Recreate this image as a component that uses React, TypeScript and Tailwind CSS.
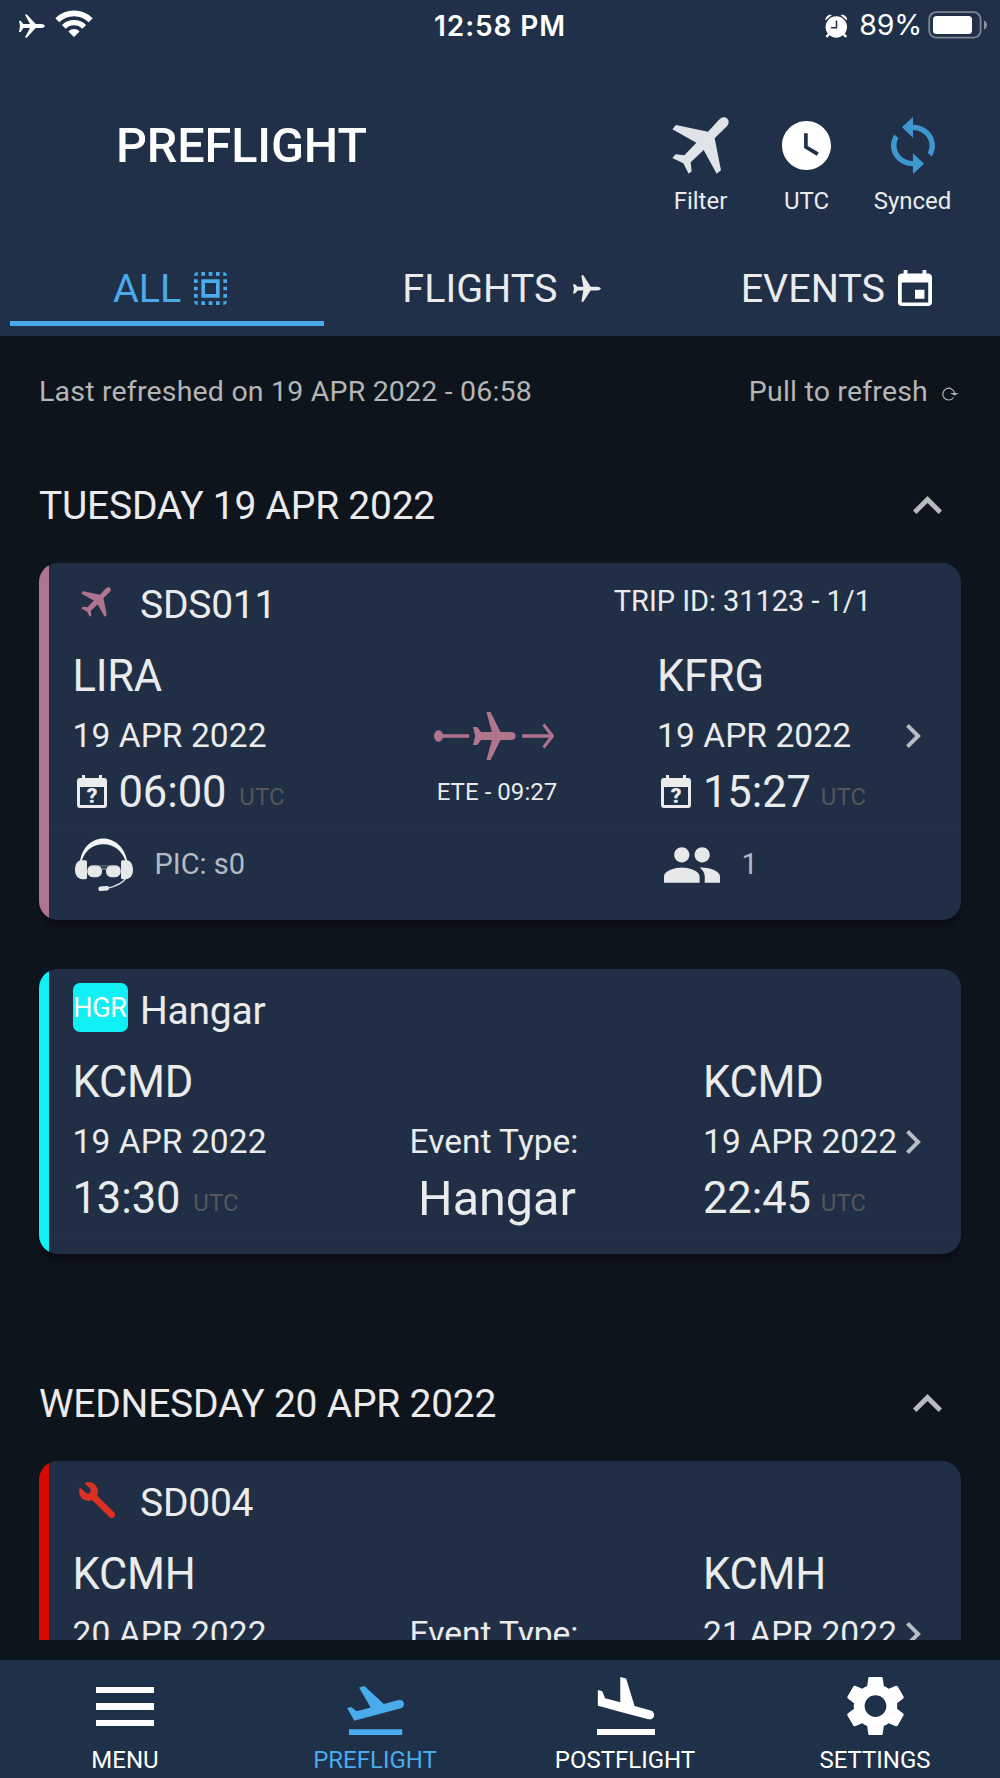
import type { ReactNode } from "react";

const PLANE_UP_RIGHT =
  "M156 1a14 14 0 0 1 14 14q0 6-4 11L128 64l19 96-13 10-39-71-39 37 3 27-9 7-16-31L1 123l10-11 26 3 36-38L1 37l11-13 96 20L141 8Q148 1 156 1Z";

type IconProps = { className: string; viewBox: string; d: string; stretch?: boolean };

function Icon({ className, viewBox, d, stretch }: IconProps) {
  return (
    <svg
      className={`block shrink-0 ${className}`}
      viewBox={viewBox}
      fill="currentColor"
      preserveAspectRatio={stretch ? "none" : undefined}
    >
      <path d={d} />
    </svg>
  );
}

function StatusBar() {
  return (
    <div className="grid h-[51px] grid-cols-3 items-center font-['Inter',sans-serif] text-white">
      <div className="flex items-center pl-[19px]">
        <svg className="mt-px h-[24px] w-[26px]" viewBox="57 41 78 70" fill="currentColor">
          <path d="M57 60h5l8 10h20L75 42l5-1 27 29h17q8 0 11 6-3 6-11 6h-17l-27 29-5-1 15-28H70l-8 12h-5l3-18z" />
        </svg>
        <svg className="mb-[4px] ml-[10px] h-[27px] w-[38px]" viewBox="0 0 38 27" fill="none" stroke="currentColor">
          <path d="M2.300 10.300a23.700 23.700 0 0 1 33.400 0" strokeWidth="5.600" />
          <path d="M8.800 16.800a14.500 14.500 0 0 1 20.400 0" strokeWidth="5.400" />
          <path d="M19 27l-5.600-5.600a8 8 0 0 1 11.200 0z" fill="currentColor" stroke="none" />
        </svg>
      </div>
      <div className="text-center text-[28px] font-semibold tracking-[0.900px]">12:58 PM</div>
      <div className="flex items-center justify-end pr-[12px]">
        <svg className="h-[24px] w-[23px]" viewBox="0 0 23 24" fill="currentColor">
          <circle cx="11.300" cy="13" r="10.700" />
          <path d="M.5 6.500A5 5 0 0 1 7 1z M22 6.500A5 5 0 0 0 15.500 1z" />
          <path d="M4 20l-2.600 3M18.600 20l2.600 3" stroke="currentColor" strokeWidth="2.400" />
          <path d="M11.500 6.500v7.200H6" fill="none" stroke="#203049" strokeWidth="1.500" />
        </svg>
        <div className="ml-[11px] text-[28.500px] tracking-[-0.200px]">89%</div>
        <svg className="mb-[2px] ml-[6px] h-[28px] w-[60px]" viewBox="0 0 60 28">
          <rect x="1.200" y="1.200" width="51.400" height="25.400" rx="7" fill="none" stroke="#7b8592" strokeWidth="1.800" />
          <rect x="5" y="5" width="39" height="18" rx="3.500" fill="#fff" />
          <path d="M56 9.500q3 1.500 3 4.500t-3 4.500z" fill="#8b949f" />
        </svg>
      </div>
    </div>
  );
}

function Action({ label, children }: { label: string; children: ReactNode }) {
  return (
    <div className="flex w-[106px] flex-col items-center">
      <div className="flex h-[66px] items-center justify-center">{children}</div>
      <div className="mt-[8px] text-[24px] leading-[30px]">{label}</div>
    </div>
  );
}

function Header() {
  return (
    <header className="flex h-[336px] shrink-0 flex-col bg-[#203049]">
      <StatusBar />
      <div className="flex h-[189px] justify-between pr-[34.500px] pl-[116px]">
        <h1 className="mt-[67px] text-[48.500px] leading-[56px] font-medium tracking-[-0.100px] text-white">PREFLIGHT</h1>
        <div className="mt-[61px] flex">
          <Action label="Filter">
            <Icon className="h-[57px] w-[57px] text-[#e0e4e8]" viewBox="0 0 171 171" d={PLANE_UP_RIGHT} />
          </Action>
          <Action label="UTC">
            <Icon
              className="h-[49px] w-[49px] text-white"
              viewBox="2 2 20 20"
              d="M12 2C6.500 2 2 6.500 2 12s4.500 10 10 10 10-4.500 10-10S17.500 2 12 2zm4.200 14.200L11 13V7h1.500v5.200l4.500 2.700-.8 1.300z"
            />
          </Action>
          <Action label="Synced">
            <Icon
              stretch
              className="h-[57px] w-[44px] text-[#3f97cf]"
              viewBox="4 1 16 22"
              d="M12 4V1L8 5l4 4V6c3.310 0 6 2.690 6 6 0 1.010-.25 1.970-.7 2.800l1.460 1.460C19.540 15.030 20 13.570 20 12c0-4.420-3.580-8-8-8zm0 14c-3.310 0-6-2.690-6-6 0-1.010.25-1.970.7-2.800L5.240 7.740C4.460 8.970 4 10.430 4 12c0 4.420 3.580 8 8 8v3l4-4-4-4v3z"
            />
          </Action>
        </div>
      </div>
      <nav className="grid grow grid-cols-3 text-[39.500px] leading-none">
        <div className="flex flex-col pl-[10px] text-[#4aabec]">
          <div className="flex h-[81px] items-center pt-[16px] pl-[103px]">
            ALL
            <Icon
              className="ml-[13px] h-[33px] w-[33px]"
              viewBox="3 3 18 18"
              d="M3 5h2V3c-1.100 0-2 .9-2 2zm0 8h2v-2H3v2zm4 8h2v-2H7v2zM3 9h2V7H3v2zm10-6h-2v2h2V3zm6 0v2h2c0-1.100-.9-2-2-2zM5 21v-2H3c0 1.100.9 2 2 2zm-2-4h2v-2H3v2zM9 3H7v2h2V3zm2 18h2v-2h-2v2zm8-8h2v-2h-2v2zm0 8c1.100 0 2-.9 2-2h-2v2zm0-12h2V7h-2v2zm0 8h2v-2h-2v2zm-4 4h2v-2h-2v2zm0-16h2V3h-2v2zM7 17h10V7H7v10zm2-8h6v6H9V9z"
            />
          </div>
          <div className="h-[5px] w-[314px] bg-[#4aabec]" />
        </div>
        <div className="flex h-[81px] items-center pt-[16px] pl-[69px]">
          FLIGHTS
          <svg className="ml-[16px] h-[27px] w-[28px]" viewBox="219 826 84 80" fill="currentColor">
            <path d="M219 853h6l8 8h17l-6-35h6l22 35h20q8 0 11 5-3 6-11 6h-20l-22 34h-6l6-34h-17l-8 9h-6l3-14z" />
          </svg>
        </div>
        <div className="flex h-[81px] items-center pt-[16px] pl-[74px]">
          EVENTS
          <Icon
            stretch
            className="mb-px ml-[13px] h-[36px] w-[34px] text-white"
            viewBox="3 1 18 20"
            d="M17 12h-5v5h5v-5zM16 1v2H8V1H6v2H5c-1.110 0-1.990.9-1.990 2L3 19c0 1.100.89 2 2 2h14c1.100 0 2-.9 2-2V5c0-1.100-.9-2-2-2h-1V1h-2zm3 18H5V8h14v11z"
          />
        </div>
      </nav>
    </header>
  );
}

function DayHeading({ children }: { children: ReactNode }) {
  return (
    <div className="flex h-[117px] shrink-0 items-center justify-between pr-[19px]">
      <h2 className="pt-[3px] text-[39px] tracking-[-0.250px]">{children}</h2>
      <Icon
        className="h-[18px] w-[29px] text-[#b9babb]"
        viewBox="6 8 12 7.410"
        d="M12 8l-6 6 1.410 1.410L12 10.830l4.590 4.580L18 14z"
      />
    </div>
  );
}

function CalendarQuestion() {
  return (
    <svg className="mr-[12px] mb-[2px] ml-[4px] h-[33px] w-[30px] shrink-0" viewBox="0 0 30 33" fill="currentColor">
      <path
        fillRule="evenodd"
        d="M5 0h3v3h14V0h3v3h2a3 3 0 0 1 3 3v24a3 3 0 0 1-3 3H3a3 3 0 0 1-3-3V6a3 3 0 0 1 3-3h2zM3 12v18h24V12z"
      />
      <text x="15" y="28" textAnchor="middle" fontFamily="Roboto, sans-serif" fontWeight="900" fontSize="21">
        ?
      </text>
    </svg>
  );
}

type StopProps = { airport: string; date: string; time?: string; estimated?: boolean; arrival?: boolean };

function Stop({ airport, date, time, estimated, arrival }: StopProps) {
  return (
    <div className={`pt-px whitespace-nowrap ${arrival ? "pl-[0.500px]" : ""}`}>
      <div className="flex h-[60px] items-center pt-[2px] text-[43.500px] tracking-[-0.250px]">{airport}</div>
      <div className="flex h-[60px] items-center text-[33.500px] tracking-[0.080px]">{date}</div>
      {time && (
        <div className="flex h-[53px] items-center text-[43.500px] tracking-[-0.100px]">
          {estimated && <CalendarQuestion />}
          {time}
          <span className={`mt-[8px] text-[24px] tracking-normal text-[#54565a] ${arrival ? "ml-[10px]" : "ml-[13px]"}`}>
            UTC
          </span>
        </div>
      )}
    </div>
  );
}

function Chevron() {
  return (
    <Icon
      className="mt-[79px] -ml-px h-[24px] w-[15px] text-[#b8bdc3]"
      viewBox="8.590 6 7.410 12"
      d="M10 6L8.590 7.410 13.170 12l-4.580 4.590L10 18l6-6z"
    />
  );
}

function Card({ accent, height, children }: { accent: string; height: string; children: ReactNode }) {
  return (
    <article className={`flex shrink-0 overflow-hidden rounded-[19px] bg-[#202f45] shadow-[0_9px_4px_-3px_#0b0e14] ${height}`}>
      <div className={`w-[9.500px] shrink-0 ${accent}`} />
      <div className="grow">{children}</div>
    </article>
  );
}

function CardTitle({ icon, title, trip }: { icon: ReactNode; title: string; trip?: string }) {
  return (
    <div className="flex h-[82px] items-center pt-px pr-[90px] pl-[24px] text-[39px] tracking-[-0.250px]">
      <div className="flex w-[67.500px] shrink-0">{icon}</div>
      <span className="pt-[2px]">{title}</span>
      {trip && <span className="mb-[5px] ml-auto text-[29px] tracking-[-0.050px]">{trip}</span>}
    </div>
  );
}

function RouteGraphic() {
  return (
    <svg className="mr-[4px] h-[50px] w-[122px] text-[#b0758e]" viewBox="434 711 122 50" fill="currentColor">
      <ellipse cx="438.600" cy="736" rx="4.600" ry="5.700" />
      <path d="M442 734.200h27v3.600h-27zM522 734.200h31v3.600h-31z" />
      <path d="M543.500 724.500L552.500 736l-9 11.500" fill="none" stroke="currentColor" strokeWidth="3" />
      <path d="M473 727h4.200l4 5h10.600l-5.300-20h4l10 20H511q4.500 0 4.500 4t-4.500 4h-10.500l-10 20h-4l5.300-20h-10.600l-4 5H473l2.200-9z" />
    </svg>
  );
}

function HeadsetIcon() {
  return (
    <svg className="h-[54px] w-[58px]" viewBox="225 654 174 161" fill="#e6e8ea">
      <path d="M240 724c6-40 34-69 70-69s65 29 72 69h-5c-10-32-34-52-67-52s-57 20-65 52z" fill="#f4f5f6" />
      <path d="M244 720h12q5 0 5 5v47q0 5-5 5h-9c-14 0-22-12-22-28s7-29 19-29zM380 720h-12q-5 0-5 5v47q0 5 5 5h9c14 0 22-12 22-28s-7-29-19-29z" />
      <rect x="262" y="735" width="44" height="36" rx="16" />
      <rect x="318" y="735" width="44" height="36" rx="16" />
      <path d="M272 737.500h80" stroke="#a9b0b9" strokeWidth="2" />
      <path d="M304 748q8-5 16 0" fill="none" stroke="#a9b0b9" strokeWidth="3" />
      <path d="M376 776c-8 12-30 22-52 28" fill="none" stroke="#e6e8ea" strokeWidth="4" />
      <rect x="295" y="798" width="32" height="14" rx="6" transform="rotate(-5 311 805)" />
    </svg>
  );
}

function WrenchIcon() {
  return (
    <svg className="-mt-[5px] ml-[6px] h-[36px] w-[36px] text-[#dc3022]" viewBox="236 366 108 108">
      <path d="M270 401l64 63" stroke="currentColor" strokeWidth="20" strokeLinecap="round" />
      <circle cx="264.500" cy="394.500" r="28.500" fill="currentColor" />
      <path d="M234 378l6 5 17 16q8 4 12-1t1-12l-17-16-4-8h-15z" fill="#202f45" />
    </svg>
  );
}

function FlightCard() {
  return (
    <Card accent="bg-[#b0758e]" height="h-[357px]">
      <CardTitle
        icon={<Icon className="-mt-[5px] ml-[8px] h-[30px] w-[30px] text-[#b0758e]" viewBox="0 0 171 171" d={PLANE_UP_RIGHT} />}
        title="SDS011"
        trip="TRIP ID: 31123 - 1/1"
      />
      <div className="grid h-[183px] grid-cols-[264px_320px_250px_1fr] border-b border-[#24344b] pl-[24px]">
        <Stop airport="LIRA" date="19 APR 2022" time="06:00" estimated />
        <div className="flex flex-col items-center pt-[66px]">
          <RouteGraphic />
          <div className="mt-[16px] pl-px text-[24px] leading-[30px] tracking-[0.050px]">ETE - 09:27</div>
        </div>
        <Stop airport="KFRG" date="19 APR 2022" time="15:27" estimated arrival />
        <Chevron />
      </div>
      <div className="flex h-[74px] items-center pl-[26px] text-[29px] text-[#b5bac2]">
        <div className="flex w-[589px] items-center">
          <HeadsetIcon />
          <span className="ml-[22px]">PIC: s0</span>
        </div>
        <Icon
          className="h-[36px] w-[56px] text-[#e6e8ea]"
          viewBox="1 5 22 14"
          d="M16 11c1.660 0 2.990-1.340 2.990-3S17.660 5 16 5c-1.660 0-3 1.340-3 3s1.340 3 3 3zm-8 0c1.660 0 2.990-1.340 2.990-3S9.660 5 8 5C6.340 5 5 6.340 5 8s1.340 3 3 3zm0 2c-2.330 0-7 1.170-7 3.500V19h14v-2.500c0-2.330-4.670-3.500-7-3.500zm8 0c-.29 0-.62.02-.97.05 1.160.84 1.970 1.970 1.970 3.450V19h6v-2.500c0-2.330-4.670-3.500-7-3.500z"
        />
        <span className="ml-[22px]">1</span>
      </div>
    </Card>
  );
}

type EventCardProps = { accent: string; icon: ReactNode; title: string; type?: string; from: StopProps; to: StopProps };

function EventCard({ accent, icon, title, type, from, to }: EventCardProps) {
  return (
    <Card accent={accent} height="h-[285px]">
      <CardTitle icon={icon} title={title} />
      <div className="grid h-[183px] grid-cols-[218px_412px_204px_1fr] border-b border-[#213148] pl-[24px]">
        <Stop {...from} />
        <div className="flex flex-col items-center pt-[61px]">
          <div className="flex h-[60px] items-center pr-[5px] text-[33.500px]">Event Type:</div>
          {type && <div className="flex h-[53px] items-center pt-px pl-px text-[48.500px]">{type}</div>}
        </div>
        <Stop {...to} arrival />
        <Chevron />
      </div>
    </Card>
  );
}

function NavItem({ label, active, children }: { label: string; active?: boolean; children: ReactNode }) {
  return (
    <div className={`flex flex-col items-center ${active ? "text-[#4aabec]" : "text-white"}`}>
      <div className="flex h-[75px] items-end justify-center">{children}</div>
      <div className="mt-[10px] text-[24px] leading-[30px]">{label}</div>
    </div>
  );
}

function BottomNav() {
  return (
    <nav className="grid h-[118px] shrink-0 grid-cols-4 bg-[#1f3049]">
      <NavItem label="MENU">
        <div className="mb-[9px] flex flex-col gap-[10px]">
          <div className="h-[6.500px] w-[58px] bg-white" />
          <div className="h-[6.500px] w-[58px] bg-white" />
          <div className="h-[6.500px] w-[58px] bg-white" />
        </div>
      </NavItem>
      <NavItem label="PREFLIGHT" active>
        <Icon
          className="h-[49px] w-[57px]"
          viewBox="1.800 3.570 20.320 17.430"
          d="M2.500 19h19v2h-19zm19.570-9.360c-.21-.8-1.040-1.280-1.840-1.060L14.920 10l-6.900-6.430-1.930.51 4.140 7.170-4.970 1.330-1.970-1.540-1.450.39 1.820 3.160.77 1.330 1.600-.43 5.310-1.420 4.350-1.160L21 11.490c.81-.23 1.280-1.050 1.070-1.850z"
        />
      </NavItem>
      <NavItem label="POSTFLIGHT">
        <Icon
          className="ml-px h-[58px] w-[58px]"
          viewBox="2.500 2 19 19"
          d="M2.500 19h19v2h-19zm7.180-5.730l4.350 1.160 5.310 1.420c.8.210 1.620-.26 1.840-1.060.21-.8-.26-1.620-1.060-1.840l-5.310-1.420-2.760-9.020L10.120 2v8.280L5.150 8.950l-.93-2.320-1.450-.39v5.170l1.600.43 5.310 1.430z"
        />
      </NavItem>
      <NavItem label="SETTINGS">
        <Icon
          className="h-[58px] w-[57px]"
          viewBox="2.600 2.400 18.800 19.200"
          d="M19.140 12.940c.04-.3.060-.61.060-.94 0-.32-.02-.64-.07-.94l2.030-1.580c.18-.14.230-.41.120-.61l-1.920-3.320c-.12-.22-.37-.29-.59-.22l-2.390.96c-.5-.38-1.030-.7-1.620-.94L14.400 2.810c-.04-.24-.24-.41-.48-.41h-3.840c-.24 0-.43.17-.47.41L9.250 5.350C8.660 5.590 8.120 5.920 7.630 6.290L5.240 5.330c-.22-.08-.47 0-.59.22L2.740 8.870c-.12.21-.08.47.12.61l2.030 1.580C4.840 11.360 4.800 11.690 4.800 12s.02.64.07.94l-2.030 1.580c-.18.14-.23.41-.12.61l1.920 3.320c.12.22.37.29.59.22l2.390-.96c.5.38 1.030.7 1.620.94l.36 2.540c.05.24.24.41.48.41h3.840c.24 0 .44-.17.47-.41l.36-2.540c.59-.24 1.130-.56 1.620-.94l2.390.96c.22.080.47 0 .59-.22l1.920-3.320c.12-.22.07-.47-.12-.61L19.140 12.940zM12 15.600c-1.980 0-3.600-1.620-3.600-3.600s1.620-3.600 3.600-3.600 3.600 1.620 3.600 3.600-1.620 3.600-3.600 3.600z"
        />
      </NavItem>
    </nav>
  );
}

export default function App() {
  return (
    <div className="flex h-[1778px] w-[1000px] flex-col overflow-hidden bg-[#0d141b] font-['Roboto',sans-serif] text-[#ebebec]">
      <Header />
      <main className="flex h-[1304px] shrink-0 flex-col overflow-hidden px-[39px]">
        <div className="flex h-[110px] shrink-0 items-center justify-between pt-[2px] text-[28.500px] tracking-[0.190px] text-[#b4b5b6]">
          <span>Last refreshed on 19 APR 2022 - 06:58</span>
          <span className="flex items-center">
            Pull to refresh
            <svg
              className="mt-[4px] mr-[2px] ml-[14px] h-[14px] w-[17px]"
              viewBox="0 0 17 14"
              fill="none"
              stroke="currentColor"
              strokeWidth="1.200"
            >
              <path d="M11.600 10.500a5.900 5.900 0 1 1 1-4.300" />
              <path d="M8 6h8.500l-3.700 2.500z" fill="currentColor" stroke="none" />
            </svg>
          </span>
        </div>
        <DayHeading>TUESDAY 19 APR 2022</DayHeading>
        <FlightCard />
        <div className="h-[49px] shrink-0" />
        <EventCard
          accent="bg-[#10f0f4]"
          icon={
            <div className="-mt-[6px] flex h-[49px] w-[55px] items-center justify-center rounded-[7px] bg-[#10f0f4] pt-px text-[27px] text-white">
              HGR
            </div>
          }
          title="Hangar"
          type="Hangar"
          from={{ airport: "KCMD", date: "19 APR 2022", time: "13:30" }}
          to={{ airport: "KCMD", date: "19 APR 2022", time: "22:45" }}
        />
        <div className="h-[90px] shrink-0" />
        <DayHeading>WEDNESDAY 20 APR 2022</DayHeading>
        <EventCard
          accent="bg-[#d80a04]"
          icon={<WrenchIcon />}
          title="SD004"
          from={{ airport: "KCMH", date: "20 APR 2022" }}
          to={{ airport: "KCMH", date: "21 APR 2022" }}
        />
      </main>
      <div className="grow" />
      <BottomNav />
    </div>
  );
}
